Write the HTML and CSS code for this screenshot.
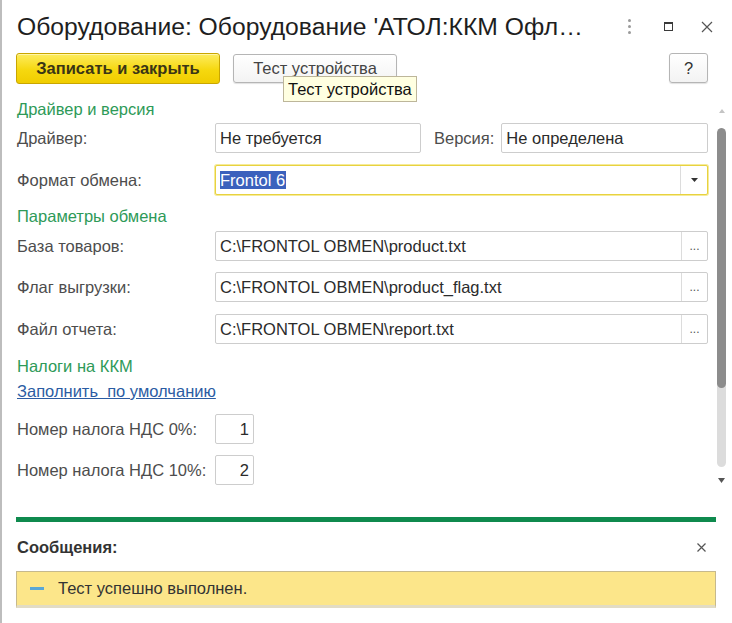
FILE: index.html
```html
<!DOCTYPE html>
<html lang="ru">
<head>
<meta charset="utf-8">
<title>Оборудование</title>
<link rel="stylesheet" href="styles.css">
</head>
<body>
<div class="window">
  <header class="titlebar">
    <h1 class="title">Оборудование: Оборудование 'АТОЛ:ККМ Офл…</h1>
    <div class="win-icons">
      <span class="ico-more"><i></i><i></i><i></i></span>
      <span class="ico-max"></span>
      <svg class="ico-close" width="12" height="12" viewBox="0 0 12 12"><path d="M1 1L11 11M11 1L1 11" stroke="#555" stroke-width="1.2" fill="none"/></svg>
    </div>
  </header>

  <div class="toolbar">
    <button class="btn btn-primary">Записать и закрыть</button>
    <div class="btn-wrap">
      <button class="btn btn-default">Тест устройства</button>
      <div class="tooltip">Тест устройства</div>
    </div>
    <button class="btn btn-help">?</button>
  </div>

  <div class="main">
    <div class="form">
      <div class="section">Драйвер и версия</div>
      <div class="row r-driver">
        <span class="label">Драйвер:</span>
        <div class="field f-half">Не требуется</div>
        <span class="label label-inline">Версия:</span>
        <div class="field f-grow">Не определена</div>
      </div>
      <div class="row r-format">
        <span class="label">Формат обмена:</span>
        <div class="field f-grow f-focus">
          <span class="value"><span class="selected">Frontol 6</span></span>
          <span class="drop"><svg width="7" height="4" viewBox="0 0 7 4"><path d="M0 0H7L3.5 4Z" fill="#333"/></svg></span>
        </div>
      </div>
      <div class="section s-params">Параметры обмена</div>
      <div class="row r-base">
        <span class="label">База товаров:</span>
        <div class="field f-grow"><span class="value">C:\FRONTOL OBMEN\product.txt</span><span class="choose">...</span></div>
      </div>
      <div class="row r-flag">
        <span class="label">Флаг выгрузки:</span>
        <div class="field f-grow"><span class="value">C:\FRONTOL OBMEN\product_flag.txt</span><span class="choose">...</span></div>
      </div>
      <div class="row r-report">
        <span class="label">Файл отчета:</span>
        <div class="field f-grow"><span class="value">C:\FRONTOL OBMEN\report.txt</span><span class="choose">...</span></div>
      </div>
      <div class="section s-tax">Налоги на ККМ</div>
      <a class="link" href="#">Заполнить  по умолчанию</a>
      <div class="row r-vat0">
        <span class="label">Номер налога НДС 0%:</span>
        <div class="field f-num">1</div>
      </div>
      <div class="row r-vat10">
        <span class="label">Номер налога НДС 10%:</span>
        <div class="field f-num">2</div>
      </div>
    </div>
    <div class="scrollbar">
      <svg class="arr arr-up" width="6" height="4" viewBox="0 0 6 4"><path d="M0 4H6L3 0Z" fill="#c4c4c4"/></svg>
      <div class="track"><div class="thumb"></div></div>
      <svg class="arr arr-down" width="7" height="5" viewBox="0 0 7 5"><path d="M0 0H7L3.5 5Z" fill="#555"/></svg>
    </div>
  </div>

  <div class="divider"></div>

  <section class="messages">
    <div class="msg-head">
      <span class="msg-title">Сообщения:</span>
      <svg class="msg-close" width="9" height="9" viewBox="0 0 9 9"><path d="M0.5 0.5L8.5 8.5M8.5 0.5L0.5 8.5" stroke="#555" stroke-width="1.2" fill="none"/></svg>
    </div>
    <div class="msg-box">
      <span class="dash"></span>
      <span class="msg-text">Тест успешно выполнен.</span>
    </div>
  </section>
</div>
</body>
</html>
```

FILE: styles.css
```css
html, body {
  margin: 0;
  padding: 0;
  background: #fff;
}

body {
  font-family: "Liberation Sans", Arial, sans-serif;
  font-size: 16.5px;
  color: #333;
}

.window {
  height: 623px;
  box-sizing: border-box;
  border-left: 2px solid #bdbdbd;
  padding-left: 14px;
  overflow: hidden;
}

/* title bar */
.titlebar {
  height: 53px;
  display: flex;
  align-items: center;
}

.title {
  flex: 1;
  margin: 0 0 0 1px;
  font-size: 24.7px;
  font-weight: normal;
  line-height: 28px;
  color: #1e1e1e;
  white-space: nowrap;
}

.win-icons {
  display: flex;
  align-items: center;
  padding-right: 19px;
}

.ico-more {
  display: flex;
  flex-direction: column;
  gap: 3px;
  margin-right: 33px;
}

.ico-more i {
  display: block;
  width: 3px;
  height: 3px;
  border-radius: 50%;
  background: #9a9a9a;
}

.ico-max {
  width: 9px;
  height: 9px;
  box-sizing: border-box;
  border: 1px solid #3a3a3a;
  border-top-width: 2px;
  margin-right: 28px;
}

.ico-close {
  display: block;
}

/* toolbar */
.toolbar {
  height: 31px;
  display: flex;
  align-items: flex-start;
}

.btn {
  font-family: inherit;
  font-size: 16.5px;
  box-sizing: border-box;
  margin: 0;
  padding: 0;
  cursor: default;
}

.btn-primary {
  width: 204px;
  height: 31px;
  border: 1px solid #c9a600;
  border-radius: 3px;
  background: linear-gradient(#fdec5e, #f6d80f 55%, #f0cd00);
  box-shadow: inset 0 1px 0 #fff6a8;
  font-weight: bold;
  color: #3a3516;
}

.btn-wrap {
  position: relative;
  margin-left: 13px;
  margin-top: 1px;
}

.btn-default {
  width: 164px;
  height: 29px;
  border: 1px solid #b5b5b5;
  border-radius: 3px;
  background: linear-gradient(#ffffff, #f3f3f3);
  box-shadow: 0 1px 1px rgba(0, 0, 0, 0.12);
  color: #444;
}

.tooltip {
  position: absolute;
  left: 50px;
  top: 22px;
  height: 26px;
  box-sizing: border-box;
  padding: 0 4px;
  line-height: 24px;
  border: 1px solid #bdb69a;
  background: #ffffe1;
  color: #111;
  white-space: nowrap;
  z-index: 5;
}

.btn-help {
  margin-left: auto;
  margin-right: 24px;
  width: 39px;
  height: 30px;
  border: 1px solid #b5b5b5;
  border-radius: 3px;
  background: linear-gradient(#ffffff, #f3f3f3);
  box-shadow: 0 1px 1px rgba(0, 0, 0, 0.12);
  color: #333;
}

/* main form */
.main {
  height: 433px;
  display: flex;
  overflow: hidden;
}

.form {
  width: 692px;
  padding-top: 16px;
  display: flex;
  flex-direction: column;
}

.section {
  height: 18px;
  line-height: 18px;
  color: #2e9a58;
  padding-left: 1px;
}

.row {
  display: flex;
  align-items: center;
  height: 30px;
}

.label {
  flex: none;
  width: 199px;
  padding-left: 1px;
  box-sizing: border-box;
  color: #4d4d4d;
  white-space: nowrap;
}

.label-inline {
  width: auto;
  margin-left: 13px;
  margin-right: 7px;
  padding-left: 0;
}

.field {
  height: 30px;
  box-sizing: border-box;
  border: 1px solid #cdcdcd;
  border-radius: 2px;
  background: #fff;
  display: flex;
  align-items: center;
  padding-left: 4px;
  color: #2b2b2b;
  white-space: nowrap;
}

.f-half {
  width: 206px;
}

.f-grow {
  flex: 1;
}

.f-num {
  width: 39px;
  justify-content: flex-end;
  padding-right: 4px;
}

.f-focus {
  border-color: #e8d23f;
  box-shadow: 0 0 0 1px #f5eb9a;
}

.value {
  flex: 1;
}

.selected {
  background: #3b61bd;
  color: #fff;
  padding: 0 1px 0 0;
}

.drop,
.choose {
  width: 26px;
  align-self: stretch;
  border-left: 1px solid #dcdcdc;
  display: flex;
  align-items: center;
  justify-content: center;
}

.choose {
  font-size: 12px;
  color: #555;
  align-items: flex-end;
  padding-bottom: 7px;
  box-sizing: border-box;
}

.r-driver { margin-top: 5px; }
.r-format { margin-top: 12px; }
.s-params { margin-top: 12px; }
.r-base { margin-top: 6px; }
.r-flag { margin-top: 11px; }
.r-report { margin-top: 12px; }
.s-tax { margin-top: 13px; }
.r-vat0 { margin-top: 14px; }
.r-vat10 { margin-top: 11px; }

.link {
  margin-top: 7px;
  height: 18px;
  line-height: 18px;
  padding-left: 1px;
  color: #2b5ca3;
  text-decoration: underline;
  white-space: pre;
  align-self: flex-start;
}

/* scrollbar */
.scrollbar {
  width: 9px;
  margin-left: 9px;
  padding-top: 25px;
  display: flex;
  flex-direction: column;
  align-items: center;
}

.arr {
  display: block;
}

.track {
  margin-top: 15px;
  width: 9px;
  height: 339px;
  border-radius: 4.5px;
  background: #dcdcdc;
  overflow: hidden;
}

.thumb {
  height: 260px;
  border-radius: 4.5px;
  background: #8c8c8c;
}

.arr-down {
  margin-top: 11px;
}

/* messages */
.divider {
  width: 700px;
  height: 5px;
  background: #0f8a4e;
}

.messages {
  width: 700px;
}

.msg-head {
  margin-top: 15px;
  height: 20px;
  display: flex;
  align-items: center;
  justify-content: space-between;
  padding-right: 10px;
}

.msg-title {
  font-weight: bold;
  color: #333;
  padding-left: 1px;
}

.msg-close {
  display: block;
}

.msg-box {
  margin-top: 14px;
  height: 37px;
  box-sizing: border-box;
  background: #fce68a;
  border: 1px solid #c6b98c;
  border-bottom: 3px solid #e2dcc4;
  display: flex;
  align-items: center;
}

.dash {
  width: 14px;
  height: 3px;
  background: #5aa7d6;
  margin-left: 13px;
  margin-right: 14px;
}

.msg-text {
  color: #333;
}
```
